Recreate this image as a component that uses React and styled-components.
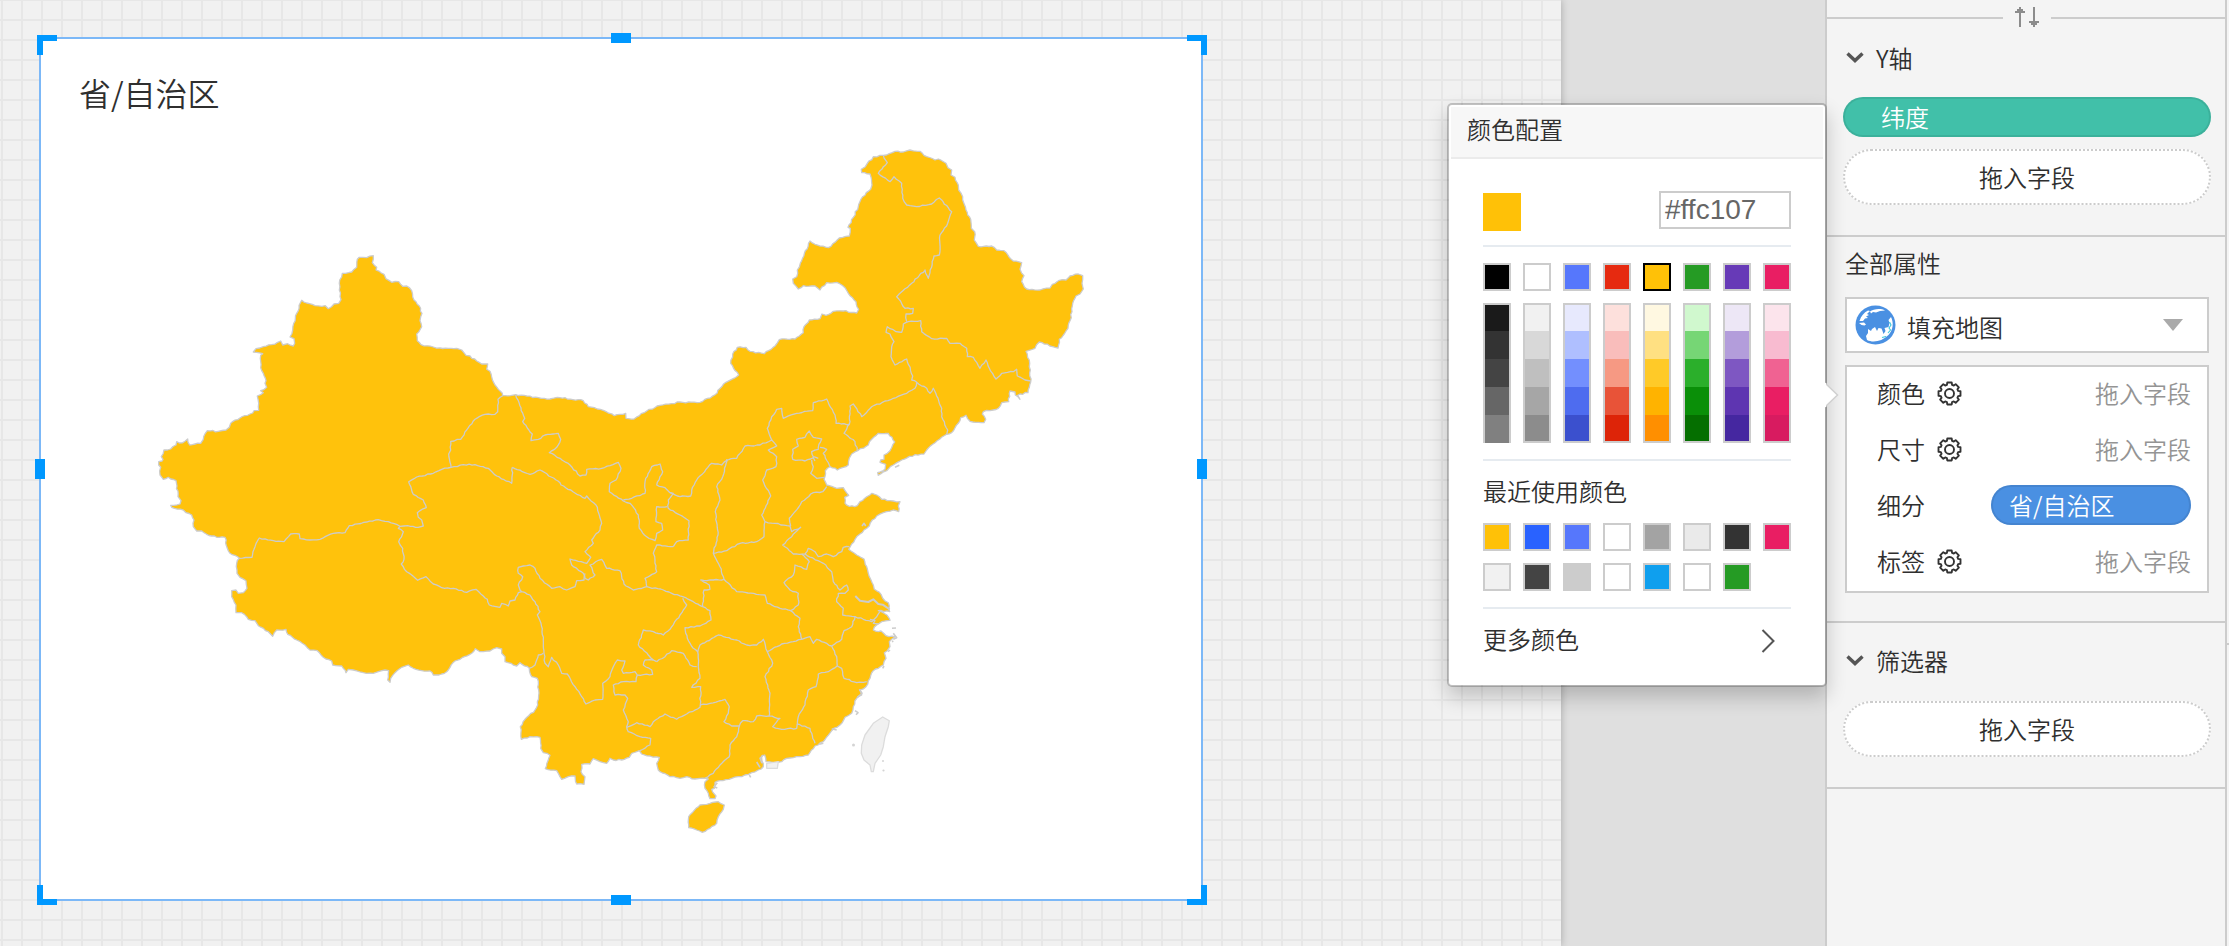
import React from "react";
import styled, { createGlobalStyle, css } from "styled-components";

const Global = createGlobalStyle`
  * { box-sizing: border-box; }
  body { margin: 0; overflow: hidden; font-family: "Noto Sans CJK SC", "Liberation Sans", sans-serif; font-weight: 350; color: #2f2f2f; }
`;

const Page = styled.div`display: flex; width: 2229px; height: 946px; background: #dfdfdf; position: relative; overflow: hidden;`;
const Canvas = styled.main`
  width: 1561px; height: 946px; flex: none; padding: 37px 0 0 39px;
  background-color: #f1f1f1;
  background-image: linear-gradient(90deg, #e7e7e7 2px, transparent 2px), linear-gradient(#e7e7e7 2px, transparent 2px);
  background-size: 20px 20px; background-position: 1px 0, 0 -1px;
  box-shadow: 0 0 8px rgba(0, 0, 0, 0.25);
`;
const Card = styled.section`
  position: relative; width: 1164px; height: 864px; background: #fff; border: 2px solid #7cb8f7;
`;
const CardTitle = styled.h1`margin: 0; padding: 30px 0 0 38px; font-size: 32px; line-height: 46px; font-weight: 350;`;
const Corner = styled.i`
  position: absolute; width: 20px; height: 20px; border: 0 solid #0098ff;
  ${(p) => (p.$v === "top" ? "top: -4px; border-top-width: 6px;" : "bottom: -6px; border-bottom-width: 6px;")}
  ${(p) => (p.$h === "left" ? "left: -4px; border-left-width: 6px;" : "right: -6px; border-right-width: 6px;")}
`;
const Grip = styled.i`
  position: absolute; background: #0098ff;
  ${(p) => (p.$side === "top" || p.$side === "bottom"
    ? css`width: 20px; height: 10px; left: 570px; ${p.$side}: -6px;`
    : css`width: 10px; height: 20px; top: 420px; ${p.$side}: -6px;`)}
`;
const MapSvg = styled.svg`position: absolute; left: -41px; top: -39px; width: 1200px; height: 900px;`;

const TILES = { a: [420, 690], b: [1440, 1080], c: [2160, 390], d: [1980, 1380] };
const pts = (tile, s) => s.trim().split(/\s+/).map((p) => {
  const [x, y] = p.split(",").map(Number);
  return [(x + TILES[tile][0]) / 3, (y + TILES[tile][1]) / 3];
});

/* Breaks long runs into short ones with a small fixed sideways offset, as a surveyed border has. */
const rough = (list, amp) => {
  const out = [list[0]];
  for (let i = 1; i < list.length; i++) {
    const [x0, y0] = list[i - 1];
    const [x1, y1] = list[i];
    const len = Math.hypot(x1 - x0, y1 - y0);
    const n = Math.min(12, Math.floor(len / 2.6));
    for (let k = 1; k < n; k++) {
      const t = k / n;
      const h = Math.sin((x0 + k * 7.13) * 12.9898 + (y0 + k) * 78.233) * 43758.5453;
      const o = (h - Math.floor(h) - 0.5) * 2 * amp;
      out.push([x0 + (x1 - x0) * t - ((y1 - y0) / len) * o, y0 + (y1 - y0) * t + ((x1 - x0) / len) * o]);
    }
    out.push(list[i]);
  }
  return out;
};
const toPath = (list, close) => "M" + list.map((p) => p[0].toFixed(1) + " " + p[1].toFixed(1)).join("L") + (close ? "Z" : "");

const OUTLINE = [
  ["a", "56,695 66,693 69,688 64,680 72,660 92,657 108,645 110,635 118,639 135,634 143,627 149,645 165,642 182,640 190,628 196,610 202,602 235,604 258,600 268,592 272,580 300,564 338,549 342,542 356,541 356,520 352,498 370,488 362,482 380,472 375,460 378,452 370,430 362,413 362,376 368,371 340,366 348,356 370,350 395,344 422,333 428,345 443,341 460,348 464,340 462,326 450,321 458,300 461,280 470,250 485,211 500,219 525,227 556,227 565,236 582,222 596,220 603,209 598,180 599,150 607,130 635,126 650,112 652,88 658,82 680,83 700,77 697,98 710,112 708,120 732,133 738,146 755,157 776,155 788,169 800,168 815,182 822,210 838,228 846,250 840,272 845,290 830,312 832,332 843,344 880,351 900,354 950,355 965,360 978,376 990,378 1010,393 1025,402 1043,402 1040,418 1050,424 1065,465 1087,490 1088,497 1127,494"],
  ["b", "210,117 232,112 310,122 325,140 370,151 403,167 437,160 438,175 462,177 500,153 540,136 600,126 660,127 705,104 730,73 755,58 776,45"],
  ["c", "56,735 32,700 38,672 52,652 78,652 90,664 133,671 165,648 178,629 225,627 250,608 252,590 268,570 300,566 306,552 318,556 340,544 370,543 410,549 416,538 408,515 385,490 375,473 350,457 320,458 300,480 285,468 250,467 235,477 220,460 218,447 230,440 232,420 241,400 270,333 285,343 325,353 358,324 388,318 391,295 384,292 400,262 415,230 428,200 452,178 456,165 450,132 425,128 424,118 436,110 460,80 490,76 525,64 550,66 570,60 600,64 612,76 645,90 655,87 678,100 684,113 695,120 693,135 705,142 715,165 716,180 728,200 738,240 752,268 754,295 764,305 763,330 775,349 815,348 830,360 852,362 880,393 905,398 900,418 912,437 905,455 920,477 960,480 990,474 997,463 1018,451 1038,450 1050,438 1075,432 1088,437 1086,460 1090,477 1080,492 1068,498 1058,520 1056,545 1050,572 1044,595 1034,610 1018,628 1014,654 958,636 945,655 918,664 928,690 931,720 932,756 924,788 900,792 893,796 900,808 886,795 885,786 870,783 866,815 845,818 835,835 820,840 790,845 787,852 797,868 792,878 750,874 738,856 722,863 715,880 695,908 680,913 645,938 620,960 612,972 585,974 545,990 520,1005 500,1022 475,1036 473,1028 495,1018 497,1003 480,997 482,990 492,988 492,975 510,962 524,936 505,910 475,910 455,928 445,945 415,961 395,972 388,985 385,1005 370,1012 352,1020 330,1010 316,1022 312,1048 320,1065 350,1075 370,1073"],
  ["d", "566,106 554,112 555,130 568,139 592,137 600,125 620,110 636,100 650,105 665,118 690,122 720,125 715,138 716,155 700,150 670,158 650,168 637,180 628,198 612,210 600,222 585,238 575,252 566,268 590,285 612,297 620,320 625,340 640,375 643,388 663,403 668,415 685,428 688,438 689,455 655,452 672,460 688,475 690,481 665,485 650,495 640,510 655,515 663,513 678,527 705,530 688,545 690,560 682,572 673,578 678,595 670,615 655,625 640,632 630,655 618,680 600,690 605,705 590,715 580,740 575,760 555,772 540,795 515,812 490,845 465,858 445,885 420,890 400,893 380,895 365,905 340,908 318,905 314,885 305,888 310,920 295,930 275,938 255,945 235,950 215,955 180,962 165,967 163,985 155,988 168,1008 165,1016 150,1016 145,1000 135,985 135,965 145,957 120,955 105,957 80,950 60,955 30,950 0,935"],
  ["b", "535,1230 530,1210 538,1192 510,1188 485,1182 478,1172 455,1180 448,1192 425,1200 400,1200 390,1195 380,1210 360,1205 340,1196 330,1212 305,1213 303,1235 315,1250 312,1273 290,1272 285,1248 265,1250 245,1258 235,1240 230,1232 196,1226 210,1186 190,1178 182,1165 180,1132 150,1130 124,1138 121,1100 135,1078 165,1050 173,1035 176,990 172,955 155,950 148,925 120,908 110,918 75,905 75,890 65,880 65,867 50,863 30,873 0,875"],
  ["a", "1006,1256 995,1270 960,1288 945,1293 920,1325 905,1332 880,1335 870,1323 845,1322 820,1315 805,1305 785,1312 765,1328 752,1345 750,1357 743,1350 746,1322 735,1320 700,1330 670,1328 640,1320 625,1318 618,1328 605,1308 578,1305 575,1293 550,1282 532,1262 510,1260 495,1245 470,1230 443,1213 438,1198 410,1200 398,1219 385,1205 355,1187 345,1172 325,1168 305,1148 288,1148 288,1125 275,1100 275,1082 288,1080 295,1090 310,1088 321,1075 318,1052 300,1042 291,1030 290,1000 298,985 270,970 262,955 255,922 230,922 200,913 185,903 170,903 160,890 162,870 155,855 138,848 130,840 95,832 92,826 120,822 123,812 114,800 108,752 85,742 70,748 60,735 62,712 56,705"],
];
const BORDERS = [
  ["a", "1088,497 1074,508 1073,545 1065,553 1035,553 1005,568 980,600 962,628 932,634 932,660 926,672 933,712 905,718 880,730 830,741 806,755 820,793 850,810 859,833 832,848 835,862 845,870 850,888 835,892 803,887 780,889 745,875 715,869 680,876 628,887 615,908 580,910 540,928 510,930 480,926 478,912 452,912 432,935 400,932 358,924 342,958 336,982 298,985"],
  ["a", "780,889 775,895 790,905 776,935 788,955 792,988 784,1002 800,1025 833,1051 858,1040 880,1062 905,1073 940,1075 980,1087 1008,1078 1030,1098 1042,1108 1048,1125 1080,1132 1085,1120 1105,1128 1110,1113 1125,1110 1135,1088 1145,1085"],
  ["a", "933,712 970,704 1005,704 1045,715 1070,738 1115,760 1117,712"],
  ["b", "97,322 150,343 180,330 240,368 243,375 315,415 320,408 348,435 365,490 360,510 335,540 340,550 315,575 332,592 320,610 270,597 275,615 310,640 315,655"],
  ["b", "315,640 312,660 290,662 285,680 260,690 240,680 215,685 180,655 165,625 150,615 130,618 115,622 115,640 128,650 115,675 120,690 125,695 150,705 165,725 180,755 172,765 183,790 190,840 192,880 195,910 205,920 215,892 235,915 245,940 262,942 285,980 305,1010 318,1032 345,1020 368,1018 368,970 390,950 400,920 412,900 435,903 425,930 430,940 465,935 472,945 518,943 515,930 490,915 495,900 520,900 530,905"],
  ["b", "148,925 165,915 175,885 190,880"],
  ["b", "472,945 468,965 430,965 400,975 405,1005 435,1005 443,1015 430,1050 445,1085 440,1100 445,1115 480,1130 512,1135 510,1155 480,1172"],
  ["b", "440,1102 470,1088 510,1100 520,1085 555,1062 590,1078 620,1062 660,1042 662,980 635,982 660,955 655,920 653,875"],
  ["b", "530,905 555,890 575,872 610,880 630,915 650,920"],
  ["b", "520,900 505,885 475,855 490,810 520,815 550,825 570,808 600,765 620,735 608,715"],
  ["b", "315,655 325,660 345,645 330,615 365,598 380,625 420,632 432,672 460,690 500,680 495,655 530,635 525,600 520,580 530,555 580,560"],
  ["b", "500,680 550,690 575,700 608,710 640,725 668,740 690,752 693,780 660,798 615,803 622,835 640,865 653,875"],
  ["b", "668,740 672,690 690,688 688,675 662,660 700,660 732,658 720,620 700,580 714,525 706,455 720,420 710,380 728,350 742,300"],
  ["b", "742,300 725,315 695,310 650,360 635,390 632,408 600,410 570,398 555,383 530,375 548,335 540,312 515,320 497,355 495,400 455,415 430,420"],
  ["b", "107,104 134,175 128,185 157,222 153,242 175,238 195,225 235,220 242,238 230,262 208,278 240,295 270,315 300,348 318,345 320,328 365,325 415,307 423,325 408,360 390,370 388,395 430,423 450,430 475,465 478,505 500,530 525,542 530,520 548,510 545,490 528,485 530,440 562,440"],
  ["b", "570,398 580,400 565,420 565,445 600,465 627,482 625,540 590,545 580,560"],
  ["b", "738,300 770,295 795,258 840,255 875,240 890,258 865,270 890,290 888,320 860,330 848,360 872,408 845,465 855,485 852,530 830,545 780,550 740,572 700,580"],
  ["b", "855,485 885,490 930,498 935,515 962,502 935,530 908,555 940,582 975,582 985,565 1005,575 1015,590 1040,582 1060,590 1085,575 1090,562 1108,560"],
  ["b", "875,240 862,205 875,170 890,148 905,145 910,175 950,160 998,152 1000,128 1040,117 1065,165 1068,190 1108,193 1092,220 1125,245 1132,272"],
  ["c", "388,883 390,828 400,822 425,860 455,830 520,805 560,790 585,775 590,757 620,775 630,790 640,775 665,835 665,860 683,900 680,913"],
  ["c", "590,757 575,750 578,738 560,687 525,705 513,680 515,650 522,635 510,612 498,607 502,590 528,605 545,607 550,582 565,575 602,572 605,605 635,626 680,625 690,640 720,640 740,655 742,680 760,682 780,715 798,690 808,715 828,747 845,730 880,725 890,718 892,738 915,750 932,753"],
  ["c", "490,76 502,98 475,130 510,155 522,140 545,160 548,205 560,225 590,230 635,222 658,204 695,245 683,280 660,315 658,375 642,378 625,445 615,420 575,460 530,500 555,535 580,535 578,550 558,552 560,575"],
  ["b", "1015,295 1000,290 995,275 1015,268 1015,262 1025,237 1000,232 988,213 975,232 950,238 955,258 938,268 938,298 975,303 1000,293 1005,303"],
  ["b", "1020,262 1040,268 1030,280 1045,308 1050,320"],
  ["b", "995,300 1000,320 992,340 1010,355 1032,352"],
  ["b", "1040,380 1028,395 1000,398 965,425 945,455 928,475 932,498"],
  ["b", "965,582 988,605 980,628 945,615 940,645 912,668 930,690 955,700 955,735 932,752 960,775 955,800 965,838 990,830 1000,850 1010,838 1055,858 1085,838 1092,812 1115,800 1125,770"],
  ["b", "975,582 1030,610 1055,635 1060,665 1080,690 1100,675 1105,690 1095,700 1075,700 1070,725 1090,745 1088,765 1125,770 1175,785 1190,770 1200,755"],
  ["b", "732,658 770,695 855,705 862,730 900,745 932,752"],
  ["b", "653,875 660,855 715,825 770,840 800,855 830,855 850,838 862,875 905,852 965,838"],
  ["d", "630,478 645,482 640,490 655,492"],
  ["b", "1055,858 1070,890 1072,918 1085,925 1092,955 1130,968 1160,965"],
  ["b", "1072,918 1045,935 1015,942 1008,980 985,990 975,1035 955,1070 952,1092 990,1105 1005,1150"],
  ["b", "862,875 878,910 855,950 870,1000 868,1068 900,1075 878,1100 905,1108 950,1105 952,1092"],
  ["b", "868,1068 830,1068 820,1085 788,1082 778,1098 755,1098 732,1085 745,1060 748,1040 735,1018 690,1030 660,1035"],
  ["b", "778,1098 770,1130 750,1155 748,1190 720,1215 700,1240 675,1255"],
];
const HAINAN = "175,1025 193,1035 190,1048 175,1070 170,1090 150,1105 127,1117 110,1110 86,1103 86,1070 108,1045 120,1035 150,1030 175,1025";
const TAIWAN = "668,771 688,782 685,800 675,830 670,860 662,885 645,910 640,935 634,935 630,915 612,900 604,880 605,855 615,825 640,790 668,771";
const HONGKONG = "320,910 355,905 352,925 320,925 320,910";
const RIVER = "586,408 600,422 625,426 640,418 655,432 668,434 689,448";
const ISLETS = ["696,505 708,504", "700,520 710,533 700,538", "696,545 700,543", "668,625 672,618", "585,752 594,758 588,764", "598,688 606,700 592,712", "530,810 515,806", "490,850 478,853", "268,945 272,952", "172,968 162,980 172,984", "310,885 300,895 306,910", "290,906 300,922", "684,575 690,570", "606,198 612,190 617,198", "705,22 718,16"];

const outlinePath = toPath(rough(OUTLINE.flatMap(([t, s]) => pts(t, s)), 0.75), true);
const ChinaMap = () => (
  <MapSvg viewBox="0 0 1200 900" fill="none" strokeLinejoin="round">
    <path d={outlinePath} fill="#ffc20c" stroke="#ccc" strokeWidth="1.3" />
    <path d={toPath(rough(pts("d", HAINAN), 0.6), true)} fill="#ffc20c" stroke="#ccc" strokeWidth="1.3" />
    {BORDERS.map(([t, s], i) => <path key={i} d={toPath(rough(pts(t, s), 0.6))} stroke="#ccc" strokeWidth="1.3" />)}
    <path d={toPath(pts("d", RIVER))} stroke="#ccc" strokeWidth="2" />
    {ISLETS.map((s) => <path key={s} d={toPath(pts("d", s))} stroke="#ccc" strokeWidth="1.6" />)}
    {[TAIWAN, HONGKONG].map((s) => <path key={s} d={toPath(pts("d", s), true)} fill="#f1f1f1" stroke="#dcdcdc" strokeWidth="1.3" />)}
    <g fill="#d4d4d4"><circle cx="853.5" cy="745" r="1.5" /><circle cx="883" cy="761" r="1" /><circle cx="883.5" cy="770.5" r="1.1" /></g>
  </MapSvg>
);

const Sidebar = styled.aside`
  width: 402px; height: 946px; margin-left: auto; margin-right: 2px; flex: none; background: #f4f4f4;
  border: solid #ccc; border-width: 0 2px;
`;
const Edge = styled.div`
  width: 2px; height: 946px; position: absolute; right: 0; top: 0;
  background: linear-gradient(#ccc, #ccc) 0 643px / 2px 2px no-repeat #f4f4f4;
`;
const Swap = styled.div`
  height: 36px; display: flex; align-items: center;
  &::before, &::after { content: ""; flex: 1; height: 2px; background: #ccc; }
  &::before { flex: 0 0 176px; }
  svg { margin: -2px 12px 0; }
`;
const Group = styled.section`
  height: ${(p) => p.$h}px; border-bottom: 2px solid #ccc; padding: 0 14px 0 16px;
`;
const Heading = styled.h2`
  margin: 0; padding: 0 0 ${(p) => p.$lift}px 2px; height: ${(p) => p.$h}px; display: flex; align-items: center; gap: 12px;
  font-size: 24px; line-height: 34px; font-weight: 350;
  svg { flex: none; margin-left: 1px; }
`;
const Pill = styled.div`
  height: 40px; border-radius: 20px; color: #fff; font-size: 24px; line-height: 39px;
  background: ${(p) => p.$color}; box-shadow: inset 0 0 0 2px rgba(0, 0, 0, 0.08);
  padding-left: ${(p) => p.$pad}px; ${(p) => p.$w && `width: ${p.$w}px;`}
`;
const DropZone = styled.div`
  height: 56px; border: 2px dotted #ccc; border-radius: 28px; background: #fff;
  margin-top: ${(p) => p.$gap || 0}px; text-align: center; font-size: 24px; line-height: 52px;
`;
const Select = styled.div`
  margin: 0 2px; height: 56px; border: 2px solid #ccc; background: #fff; display: flex; align-items: center;
  padding: 0 24px 0 8px; font-size: 24px; line-height: 34px; gap: 11px;
  span { flex: 1; padding-top: 3px; }
`;
const Props = styled.div`margin: 12px 2px 0; border: 2px solid #ccc; background: #fff; padding: 0 16px 0 30px;`;
const PropRow = styled.div`
  height: 56px; display: flex; align-items: center; font-size: 24px; line-height: 34px; padding-bottom: 4px;
  svg { margin-left: 12px; }
`;
const Hint = styled.span`margin-left: auto; color: #949494;`;
const Spacer = styled.span`margin-left: auto;`;

const Popup = styled.div`
  position: absolute; left: 1447px; top: 103px; width: 380px; height: 584px;
  background: #fff; background-clip: padding-box; border: 2px solid rgba(0, 0, 0, 0.2); border-radius: 5px;
  box-shadow: 0 10px 20px rgba(0, 0, 0, 0.2); padding: 2px;
`;
const Pointer = styled.svg`position: absolute; left: 376px; top: 276px;`;
const PopupHead = styled.header`height: 52px; background: #f7f7f7; border-bottom: 2px solid #ebebeb; padding-left: 16px; font-size: 24px; line-height: 44px;`;
const PopupBody = styled.div`padding: 32px 32px 0;`;
const Current = styled.div`
  display: flex; justify-content: space-between; align-items: flex-start; height: 56px; border-bottom: 2px solid #e6ebf0;
`;
const Chosen = styled.div`width: 38px; height: 38px; margin-top: 2px; background: #ffc107;`;
const HexField = styled.div`
  width: 132px; height: 38px; border: 2px solid #ccc; color: #666; padding-left: 4px;
  font: 400 28px/34px "Liberation Sans", sans-serif;
`;
const SwatchRow = styled.div`display: flex; gap: 12px; margin-top: ${(p) => p.$top}px;`;
const Swatch = styled.div`width: 28px; height: 28px; border: 2px solid ${(p) => (p.$active ? "#000" : "#ccc")}; background: ${(p) => p.$c};`;
const Ramp = styled.div`
  width: 28px; height: 140px; border: 2px solid #ccc; display: flex; flex-direction: column;
  ${(p) => p.$open && "border-bottom-width: 0;"}
`;
const Shade = styled.div`flex: none; height: 28px; background: ${(p) => p.$c}; &:first-child { height: 26px; } &:last-child { flex: 1; }`;
const Rule = styled.div`height: 2px; background: #e6ebf0; margin-top: 16px;`;
const Label = styled.div`height: 62px; font-size: 24px; line-height: 60px;`;
const More = styled.div`
  height: 62px; display: flex; align-items: center; justify-content: space-between; font-size: 24px; line-height: 34px; padding-right: 16px;
  span { margin-top: -3px; }
  svg { margin-top: 2px; }
`;

const Chevron = () => (
  <svg width="18" height="12" viewBox="0 0 18 12" fill="none"><path d="M1.5 1.5 9 8.6l7.5-7.1" stroke="#555" strokeWidth="3.4" /></svg>
);
const Gear = () => {
  const p = [];
  for (let i = 0; i < 8; i++) {
    const c = (i * Math.PI) / 4;
    [[-0.29, 9], [-0.2, 11.2], [0.2, 11.2], [0.29, 9]].forEach(([a, r]) => p.push(`${(12.5 + r * Math.sin(c + a)).toFixed(2)} ${(12.5 - r * Math.cos(c + a)).toFixed(2)}`));
  }
  return (
    <svg width="25" height="25" viewBox="0 0 25 25" fill="none" stroke="#333" strokeWidth="1.9" strokeLinejoin="round">
      <path d={`M${p.join("L")}Z`} /><circle cx="12.5" cy="12.5" r="4.5" />
    </svg>
  );
};
const Globe = () => (
  <svg width="41" height="40" viewBox="0 0 41 40">
    <ellipse cx="20.5" cy="20" rx="20" ry="19.5" fill="#4a90e2" />
    <path d="M4.500 16C6 11 9 7.500 13 5.500l2 .5-3 3 2 1-3 1.500 2 1.500-3 .5-2 2.500zM15 6.500C18 4 26 3 30 5.500l-5 .5-4 1.500-3-.5-2 1.500zM4 18l5-.5 2 2-1.500 1-3-.5zM12 35l-1-4 2-3 0-4 3 2 1-2 3-2 2 4 1.500-3 3 .5 1 2.500 1 3 2-3-1-3 4-1 1-4-1-3 2.500-3c3 6 2 13-2.500 18C27 36.500 18 38 12 35z" fill="#fff" />
    <path d="M34.500 17l1.500 3-2 3 1.500 2-2.500 3M27 32.500l4-1" stroke="#3cc8dc" fill="none" strokeWidth="1.1" />
  </svg>
);

const BASE = ["#000", "#fff", "#5677fc", "#e62a10", "#ffc107", "#259b24", "#673ab7", "#e91e63"];
const RAMPS = [
  ["#1a1a1a", "#333", "#444", "#666", "#808080"],
  ["#f1f1f1", "#d8d8d8", "#bfbfbf", "#a6a6a6", "#8c8c8c"],
  ["#e7e9fd", "#afbfff", "#738ffe", "#4e6cef", "#3b50ce"],
  ["#fde0dc", "#f9bdbb", "#f69983", "#e85338", "#dd2408"],
  ["#fff8e1", "#ffe082", "#ffca28", "#ffb300", "#ff8f00"],
  ["#d0f8ce", "#76d675", "#2baf2b", "#0a8f08", "#056f00"],
  ["#ede7f6", "#b39ddb", "#7e57c2", "#5e35b1", "#4527a0"],
  ["#fce4ec", "#f8bbd0", "#f06292", "#e91e63", "#d81b60"],
];
const RECENT = [
  ["#ffc107", "#2962ff", "#5677fc", "#fff", "#a3a3a3", "#eaeaea", "#333", "#e91e63"],
  ["#f1f1f1", "#444", "#ccc", "#fff", "#0f9fee", "#fff", "#259b24"],
];

export default function App() {
  return (
    <Page>
      <Global />
      <Canvas>
        <Card>
          <CardTitle>省/自治区</CardTitle>
          <ChinaMap />
          {["top", "bottom"].map((v) => ["left", "right"].map((h) => <Corner key={v + h} $v={v} $h={h} />))}
          {["top", "bottom", "left", "right"].map((s) => <Grip key={s} $side={s} />)}
        </Card>
      </Canvas>
      <Sidebar>
        <Swap>
          <svg width="24" height="20" viewBox="0 0 24 20" fill="#8c8c8c">
            <path d="M4 20V6H0V4h2V2h2V0h2v2h2v2h2v2H6v14zM18 0v14h-4v2h2v2h2v2h2v-2h2v-2h2v-2h-4V0z" />
          </svg>
        </Swap>
        <Group $h={201}>
          <Heading $h={61} $lift={18}><Chevron />Y轴</Heading>
          <Pill $color="#41c0a9" $pad={38}>纬度</Pill>
          <DropZone $gap={12}>拖入字段</DropZone>
        </Group>
        <Group $h={386}>
          <Heading $h={60} $lift={8}>全部属性</Heading>
          <Select>
            <Globe />
            <span>填充地图</span>
            <svg width="20" height="12" viewBox="0 0 20 12"><path d="M0 0h20L10 12z" fill="#aaa" /></svg>
          </Select>
          <Props>
            <PropRow>颜色<Gear /><Hint>拖入字段</Hint></PropRow>
            <PropRow>尺寸<Gear /><Hint>拖入字段</Hint></PropRow>
            <PropRow>细分<Spacer /><Pill $color="#4a90e2" $pad={18} $w={200}>省/自治区</Pill></PropRow>
            <PropRow>标签<Gear /><Hint>拖入字段</Hint></PropRow>
          </Props>
        </Group>
        <Group $h={166}>
          <Heading $h={78} $lift={2}><Chevron />筛选器</Heading>
          <DropZone>拖入字段</DropZone>
        </Group>
      </Sidebar>
      <Edge />
      <Popup>
        <Pointer width="16" height="28" viewBox="0 0 16 28">
          <path d="M0 2 12.500 14 0 26" fill="#fff" stroke="#d0d0d0" strokeWidth="1.500" /><path d="M0 2v24" stroke="#fff" strokeWidth="2" />
        </Pointer>
        <PopupHead>颜色配置</PopupHead>
        <PopupBody>
          <Current><Chosen /><HexField>#ffc107</HexField></Current>
          <SwatchRow $top={16}>{BASE.map((c) => <Swatch key={c} $c={c} $active={c === "#ffc107"} />)}</SwatchRow>
          <SwatchRow $top={12}>
            {RAMPS.map((r, i) => <Ramp key={i} $open={i === 0}>{r.map((c) => <Shade key={c} $c={c} />)}</Ramp>)}
          </SwatchRow>
          <Rule />
          <Label>最近使用颜色</Label>
          {RECENT.map((r, i) => <SwatchRow key={i} $top={i * 12}>{r.map((c, k) => <Swatch key={k} $c={c} />)}</SwatchRow>)}
          <Rule />
          <More>
            <span>更多颜色</span>
            <svg width="14" height="24" viewBox="0 0 14 24" fill="none"><path d="M1.500 1 12.500 12 1.500 23" stroke="#555" strokeWidth="2" /></svg>
          </More>
        </PopupBody>
      </Popup>
    </Page>
  );
}
